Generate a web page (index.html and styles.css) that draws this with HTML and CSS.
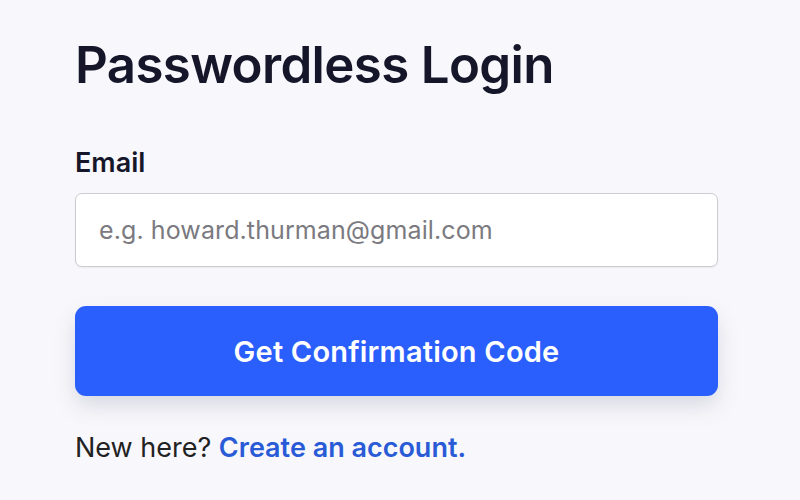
FILE: index.html
```html
<!DOCTYPE html>
<html lang="en">
<head>
<meta charset="UTF-8">
<meta name="viewport" content="width=device-width, initial-scale=1.0">
<title>Passwordless Login</title>
<link rel="stylesheet" href="styles.css">
</head>
<body>
<main class="login">
    <h1>Passwordless Login</h1>
    <form class="login-form">
        <label for="email">Email</label>
        <input type="email" id="email" placeholder="e.g. howard.thurman@gmail.com">
        <button type="button" class="submit-btn">Get Confirmation Code</button>
    </form>
    <p class="signup">New here? <a href="#">Create an account.</a></p>
</main>
</body>
</html>
```

FILE: styles.css
```css
body {
    font-family: 'Inter', 'Noto Sans', sans-serif;
    background: #f8f8fc;
    margin: 0;
    padding: 0;
    color: #16162a;
}
.login {
    width: 643px;
    padding: 39px 0 0 75px;
}
.login h1 {
    font-size: 51px;
    line-height: 1;
    font-weight: 600;
    margin: 0 0 59px;
    letter-spacing: -0.65px;
}
.login-form label {
    display: block;
    font-size: 27px;
    line-height: 1;
    font-weight: 600;
    margin-bottom: 17px;
}
.login-form input {
    display: block;
    box-sizing: border-box;
    width: 100%;
    height: 74px;
    padding: 0 23px;
    font-family: inherit;
    font-size: 25px;
    letter-spacing: 0.1px;
    border: 1px solid #cbcbd2;
    border-radius: 7px;
    background: #fff;
    color: #16162a;
    box-shadow: 0 1px 2px rgba(0, 0, 0, 0.06);
}
.login-form input::placeholder {
    color: #7a7a80;
}
.submit-btn {
    display: block;
    width: 100%;
    height: 90px;
    margin-top: 39px;
    background: #2b5ffd;
    color: white;
    border: none;
    border-radius: 11px;
    font-family: inherit;
    font-size: 29px;
    font-weight: 600;
    letter-spacing: 0.2px;
    cursor: pointer;
    box-shadow: 0 10px 22px rgba(40, 40, 80, 0.15);
}
.signup {
    font-size: 27px;
    line-height: 1;
    margin: 38px 0 0;
    color: #222;
}
.signup a {
    color: #2a5bd7;
    font-weight: 600;
    text-decoration: none;
}
```
